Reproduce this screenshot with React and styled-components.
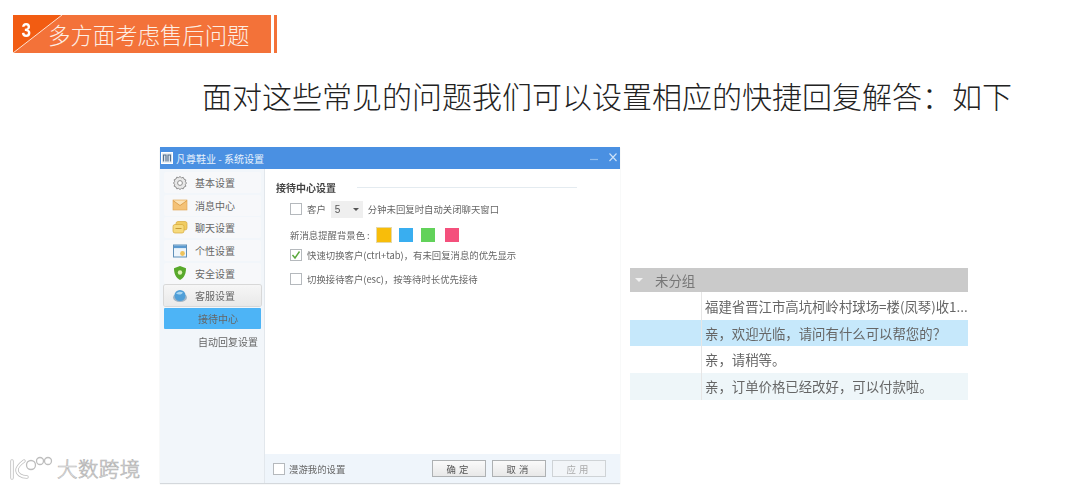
import React from 'react';
import styled, { createGlobalStyle } from 'styled-components';

const CJK = '"Noto Sans CJK SC", "Liberation Sans", sans-serif';

const GlobalStyle = createGlobalStyle`
  html, body {
    margin: 0;
    padding: 0;
    background: #fff;
    font-family: ${CJK};
  }
`;

const Page = styled.div`
  position: relative;
  width: 1080px;
  height: 488px;
  padding: 15px 0 0 13px;
  box-sizing: border-box;
  overflow: hidden;
  background: #fff;
`;

const Heading = styled.div`
  display: flex;
  gap: 3px;
  height: 38px;
`;

const Banner = styled.div`
  position: relative;
  display: flex;
  align-items: center;
  width: 258px;
  background: #f37239;
  color: #fff;
`;

const Corner = styled.svg`
  position: absolute;
  left: 0;
  top: 0;
`;

const Step = styled.span`
  position: relative;
  width: 35px;
  padding-left: 10px;
  box-sizing: border-box;
  margin-top: -7px;
  font: bold 20px "Liberation Sans", sans-serif;
  transform: scaleX(0.85);
  transform-origin: left;
`;

const BannerTitle = styled.span`
  position: relative;
  font-size: 22.4px;
  font-weight: 300;
  line-height: 38px;
  color: #fdeee4;
`;

const Accent = styled.div`
  width: 3px;
  background: #f37239;
`;

const Lead = styled.p`
  margin: 22px 0 0 189px;
  font-size: 30px;
  line-height: 40px;
  font-weight: 300;
  color: #222;
  white-space: nowrap;
`;

const Content = styled.div`
  display: flex;
  align-items: flex-start;
  gap: 10px;
  margin: 32px 0 0 147px;
`;

const Dialog = styled.div`
  display: flex;
  flex-direction: column;
  width: 460px;
  height: 336px;
  background: #fff;
  box-shadow: 0 1px 1px #d4d8dc;
  filter: blur(0.35px);
`;

const TitleBar = styled.div`
  display: flex;
  align-items: center;
  gap: 3px;
  height: 22px;
  padding: 0 1px;
  background: #4a90e2;
  color: #e8f2fc;
  font-size: 10px;
`;

const WindowName = styled.span`
  flex: 1;
  white-space: nowrap;
`;

const DialogBody = styled.div`
  display: flex;
  flex: 1;
  min-height: 0;
`;

const Sidebar = styled.nav`
  display: flex;
  flex-direction: column;
  width: 105px;
  padding: 3px 3px 0 4px;
  box-sizing: border-box;
  background: #f2f6fa;
  border-right: 1px solid #e2e7ec;
`;

const SideItem = styled.div`
  display: flex;
  align-items: center;
  gap: 7px;
  height: 21px;
  margin-bottom: 1.7px;
  padding-left: 8px;
  background: ${p => (p.$open ? 'linear-gradient(#f6f6f6, #e9e9e9)' : '#f7f8fa')};
  border-radius: 2px;
  box-shadow: ${p => (p.$open ? '0 0 0 1px #d8d8d8' : 'none')};
  color: #666;
  font-size: 10px;
`;

const SubItem = styled.div`
  height: 21px;
  margin-bottom: 1.7px;
  padding-left: ${p => (p.$active ? '34px' : '34px')};
  line-height: 21px;
  font-size: 10px;
  color: #666;
  background: ${p => (p.$active ? '#4db4f6' : 'transparent')};
  border-radius: 1px;
`;

const Main = styled.div`
  display: flex;
  flex-direction: column;
  flex: 1;
  min-width: 0;
`;

const Settings = styled.div`
  flex: 1;
  padding: 10px 0 0 11px;
`;

const SectionHead = styled.div`
  display: flex;
  align-items: center;
  gap: 21px;
  width: 301px;
  height: 16px;
  font-size: 10px;
  font-weight: 700;
  color: #444;
`;

const Rule = styled.span`
  flex: 1;
  height: 1px;
  background: #e4ebf0;
`;

const Row = styled.div`
  display: flex;
  align-items: center;
  gap: ${p => p.$gap || 3}px;
  height: 16px;
  margin-top: ${p => p.$top}px;
  margin-left: 14px;
  font-size: 9.4px;
  color: #666;
  white-space: nowrap;
`;

const Check = styled.span`
  display: inline-flex;
  align-items: center;
  justify-content: center;
  width: 10px;
  height: 10px;
  flex: none;
  margin-right: 2px;
  background: #fff;
  border: 1px solid #b5b9bd;
`;

const Select = styled.span`
  display: flex;
  align-items: center;
  justify-content: space-between;
  width: 32px;
  height: 17px;
  margin: 0 2px;
  padding: 0 4px;
  box-sizing: border-box;
  background: #efefef;
  color: #555;
  font: 10px "Liberation Sans", sans-serif;
`;

const Caret = styled.i`
  width: 0;
  height: 0;
  border-left: 3.5px solid transparent;
  border-right: 3.5px solid transparent;
  border-top: 3.5px solid #555;
`;

const Swatch = styled.span`
  width: 14px;
  height: 14px;
  margin-right: ${p => p.$gap || 5}px;
  background: ${p => p.$color};
  box-shadow: ${p => (p.$selected ? '0 0 0 1px #e6d9a8' : 'none')};
`;

const Footer = styled.div`
  display: flex;
  align-items: center;
  height: 29px;
  padding: 0 14px 0 8px;
  background: #eff5fb;
  font-size: 9.4px;
  color: #666;
`;

const FooterLabel = styled.span`
  flex: 1;
  margin-left: 2px;
`;

const Button = styled.span`
  display: flex;
  align-items: center;
  justify-content: center;
  width: 54px;
  height: 17px;
  margin-left: 6px;
  box-sizing: border-box;
  background: ${p => (p.$disabled ? '#f2f5f8' : 'linear-gradient(#fafafa, #e8e8e8)')};
  border: 1px solid ${p => (p.$disabled ? '#cfd3d6' : '#aeb1b3')};
  color: ${p => (p.$disabled ? '#aaa' : '#555')};
  font-size: 9.4px;
  letter-spacing: 3px;
`;

const Table = styled.div`
  width: 338px;
  margin-top: 121px;
  font-size: 13.4px;
  color: #666;
  filter: blur(0.35px);
`;

const GroupHead = styled.div`
  display: flex;
  align-items: center;
  gap: 12px;
  height: 24px;
  padding-left: 5px;
  background: #cacaca;
  color: #777;
`;

const GroupCaret = styled.i`
  width: 0;
  height: 0;
  border-left: 4px solid transparent;
  border-right: 4px solid transparent;
  border-top: 4px solid #f2f2f2;
`;

const Line = styled.div`
  display: flex;
  height: ${p => p.$h}px;
  background: ${p => p.$bg || '#fff'};
`;

const LineKey = styled.span`
  width: 72px;
  flex: none;
  box-sizing: border-box;
  border-right: 1px solid #e6e6e6;
`;

const LineText = styled.span`
  flex: 1;
  padding-left: 3px;
  line-height: ${p => p.$h}px;
  white-space: nowrap;
`;

const Watermark = styled.div`
  position: absolute;
  left: 9px;
  bottom: 7px;
  display: flex;
  align-items: center;
  gap: 3px;
  height: 26px;
`;

const WatermarkText = styled.span`
  font-size: 20.5px;
  letter-spacing: 0.4px;
  font-weight: 300;
  color: #fff;
  -webkit-text-stroke: 0.7px #b5b5b5;
`;

const GearIcon = () => (
  <svg width="16" height="16" viewBox="0 0 16 16">
    <path d="M8 1.5l1.4 1.3 1.9-.4.7 1.8 1.8.7-.4 1.9L14.5 8l-1.1 1.4.4 1.9-1.8.7-.7 1.8-1.9-.4L8 14.5l-1.4-1.1-1.9.4-.7-1.8-1.8-.7.4-1.9L1.5 8l1.1-1.4-.4-1.9 1.8-.7.7-1.8 1.9.4z" fill="#e8e8e8" stroke="#8f8f8f" />
    <circle cx="8" cy="8" r="2.4" fill="#fff" stroke="#8f8f8f" />
  </svg>
);

const MailIcon = () => (
  <svg width="16" height="16" viewBox="0 0 16 16">
    <rect x="1" y="3" width="14" height="10" fill="#f4c277" stroke="#dfa14e" strokeWidth=".6" />
    <path d="M1 3.5l7 5 7-5" fill="#fbe2b5" stroke="#d8963f" strokeWidth=".8" />
  </svg>
);

const ChatIcon = () => (
  <svg width="16" height="16" viewBox="0 0 16 16">
    <rect x="4" y="1.5" width="11" height="8.5" rx="2" fill="#f0cc62" stroke="#d7a93a" strokeWidth=".7" />
    <rect x="1" y="4.5" width="11" height="8.5" rx="2" fill="#f6da7d" stroke="#d7a93a" strokeWidth=".7" />
    <path d="M3.5 8.5h6" stroke="#c89a36" />
  </svg>
);

const WindowIcon = () => (
  <svg width="16" height="16" viewBox="0 0 16 16">
    <rect x="1.5" y="2" width="13" height="12" fill="#eef5fb" stroke="#5f8fb8" />
    <rect x="2" y="2.5" width="12" height="2.6" fill="#5b9ad0" />
    <circle cx="10.5" cy="10.5" r="2.4" fill="#eec35c" />
  </svg>
);

const ShieldIcon = () => (
  <svg width="16" height="16" viewBox="0 0 16 16">
    <path d="M8 1l6 2.2c0 5.5-1.7 9.5-6 11.8C3.700 12.700 2 8.700 2 3.200z" fill="#58a92b" />
    <circle cx="8" cy="7.500" r="2.200" fill="#dff1b8" />
  </svg>
);

const GlobeIcon = () => (
  <svg width="16" height="16" viewBox="0 0 16 16">
    <ellipse cx="8" cy="9.500" rx="7" ry="4.500" fill="#9fb4c6" />
    <circle cx="8" cy="7.500" r="5.500" fill="#4f9fd8" />
    <path d="M4 5.500c2-2 5-2.500 7-1-1 2-4 3-7 1z" fill="#a9d6f2" />
  </svg>
);

const AppIcon = () => (
  <svg width="12" height="12" viewBox="0 0 12 12">
    <rect x=".5" y=".5" width="11" height="11" fill="#e7eef5" stroke="#fff" />
    <path d="M2.500 9.500V3h2.500v6.500M7 9.500V3h2.500v6.500" fill="none" stroke="#55708c" strokeWidth="1.200" />
  </svg>
);

const WindowControls = () => (
  <svg width="30" height="22" viewBox="0 0 30 22">
    <path d="M1 12.500h8" stroke="#8fbcee" strokeWidth="1.200" />
    <path d="M20.500 6.500l7 7.500M27.500 6.500l-7 7.500" stroke="#cfe3f8" strokeWidth="1.100" />
  </svg>
);

const Tick = () => (
  <svg width="10" height="10" viewBox="0 0 10 10">
    <path d="M1.500 5l2.500 3 4.500-6.500" fill="none" stroke="#5aa83c" strokeWidth="1.400" />
  </svg>
);

const WatermarkLogo = () => (
  <svg width="45" height="26" viewBox="0 0 45 26" fill="none">
    <path d="M3 6v17M15 6c-4 3-7 6-7 9 0 4 4 7 10 7" stroke="#bdbdbd" strokeWidth="3.400" strokeLinecap="round" />
    <path d="M3 6v17M15 6c-4 3-7 6-7 9 0 4 4 7 10 7" stroke="#fff" strokeWidth="1.800" strokeLinecap="round" />
    <circle cx="22" cy="10" r="4.500" fill="#fff" stroke="#bdbdbd" strokeWidth="1.300" />
    <circle cx="31" cy="6" r="3.500" fill="#fff" stroke="#bdbdbd" strokeWidth="1.300" />
    <circle cx="39" cy="6" r="3.500" fill="#fff" stroke="#bdbdbd" strokeWidth="1.300" />
  </svg>
);

const menu = [
  { label: '基本设置', icon: <GearIcon /> },
  { label: '消息中心', icon: <MailIcon /> },
  { label: '聊天设置', icon: <ChatIcon /> },
  { label: '个性设置', icon: <WindowIcon /> },
  { label: '安全设置', icon: <ShieldIcon /> },
  { label: '客服设置', icon: <GlobeIcon />, open: true },
];

const replies = [
  { text: '福建省晋江市高坑柯岭村球场=楼(凤琴)收1...', h: 28 },
  { text: '亲，欢迎光临，请问有什么可以帮您的？', h: 26, bg: '#c6e8fb' },
  { text: '亲，请稍等。', h: 27 },
  { text: '亲，订单价格已经改好，可以付款啦。', h: 27, bg: '#eef6f9' },
];

export default function App() {
  return (
    <Page>
      <GlobalStyle />
      <Heading>
        <Banner>
          <Corner width="50" height="38" viewBox="0 0 50 38">
            <path d="M0 0h49L0 38z" fill="#f25c12" />
            <path d="M0 38L49 0" stroke="#fde3d3" strokeWidth="1" />
          </Corner>
          <Step>3</Step>
          <BannerTitle>多方面考虑售后问题</BannerTitle>
        </Banner>
        <Accent />
      </Heading>

      <Lead>面对这些常见的问题我们可以设置相应的快捷回复解答：如下</Lead>

      <Content>
        <Dialog>
          <TitleBar>
            <AppIcon />
            <WindowName>凡尊鞋业 - 系统设置</WindowName>
            <WindowControls />
          </TitleBar>
          <DialogBody>
            <Sidebar>
              {menu.map(item => (
                <SideItem key={item.label} $open={item.open}>
                  {item.icon}
                  {item.label}
                </SideItem>
              ))}
              <SubItem $active>接待中心</SubItem>
              <SubItem>自动回复设置</SubItem>
            </Sidebar>
            <Main>
              <Settings>
                <SectionHead>
                  接待中心设置
                  <Rule />
                </SectionHead>
                <Row $top={6}>
                  <Check />
                  客户
                  <Select>5<Caret /></Select>
                  分钟未回复时自动关闭聊天窗口
                </Row>
                <Row $top={10} $gap={0}>
                  <span style={{ marginRight: 4 }}>新消息提醒背景色 :</span>
                  <Swatch $color="#f8bd0a" $selected />
                  <Swatch $color="#39aef0" />
                  <Swatch $color="#62d25a" $gap={7} />
                  <Swatch $color="#f4507c" />
                </Row>
                <Row $top={4}>
                  <Check><Tick /></Check>
                  快速切换客户(ctrl+tab)，有未回复消息的优先显示
                </Row>
                <Row $top={8}>
                  <Check />
                  切换接待客户(esc)，按等待时长优先接待
                </Row>
              </Settings>
              <Footer>
                <Check />
                <FooterLabel>漫游我的设置</FooterLabel>
                <Button>确定</Button>
                <Button>取消</Button>
                <Button $disabled>应用</Button>
              </Footer>
            </Main>
          </DialogBody>
        </Dialog>

        <Table>
          <GroupHead>
            <GroupCaret />
            未分组
          </GroupHead>
          {replies.map(reply => (
            <Line key={reply.text} $h={reply.h} $bg={reply.bg}>
              <LineKey />
              <LineText $h={reply.h}>{reply.text}</LineText>
            </Line>
          ))}
        </Table>
      </Content>

      <Watermark>
        <WatermarkLogo />
        <WatermarkText>大数跨境</WatermarkText>
      </Watermark>
    </Page>
  );
}
